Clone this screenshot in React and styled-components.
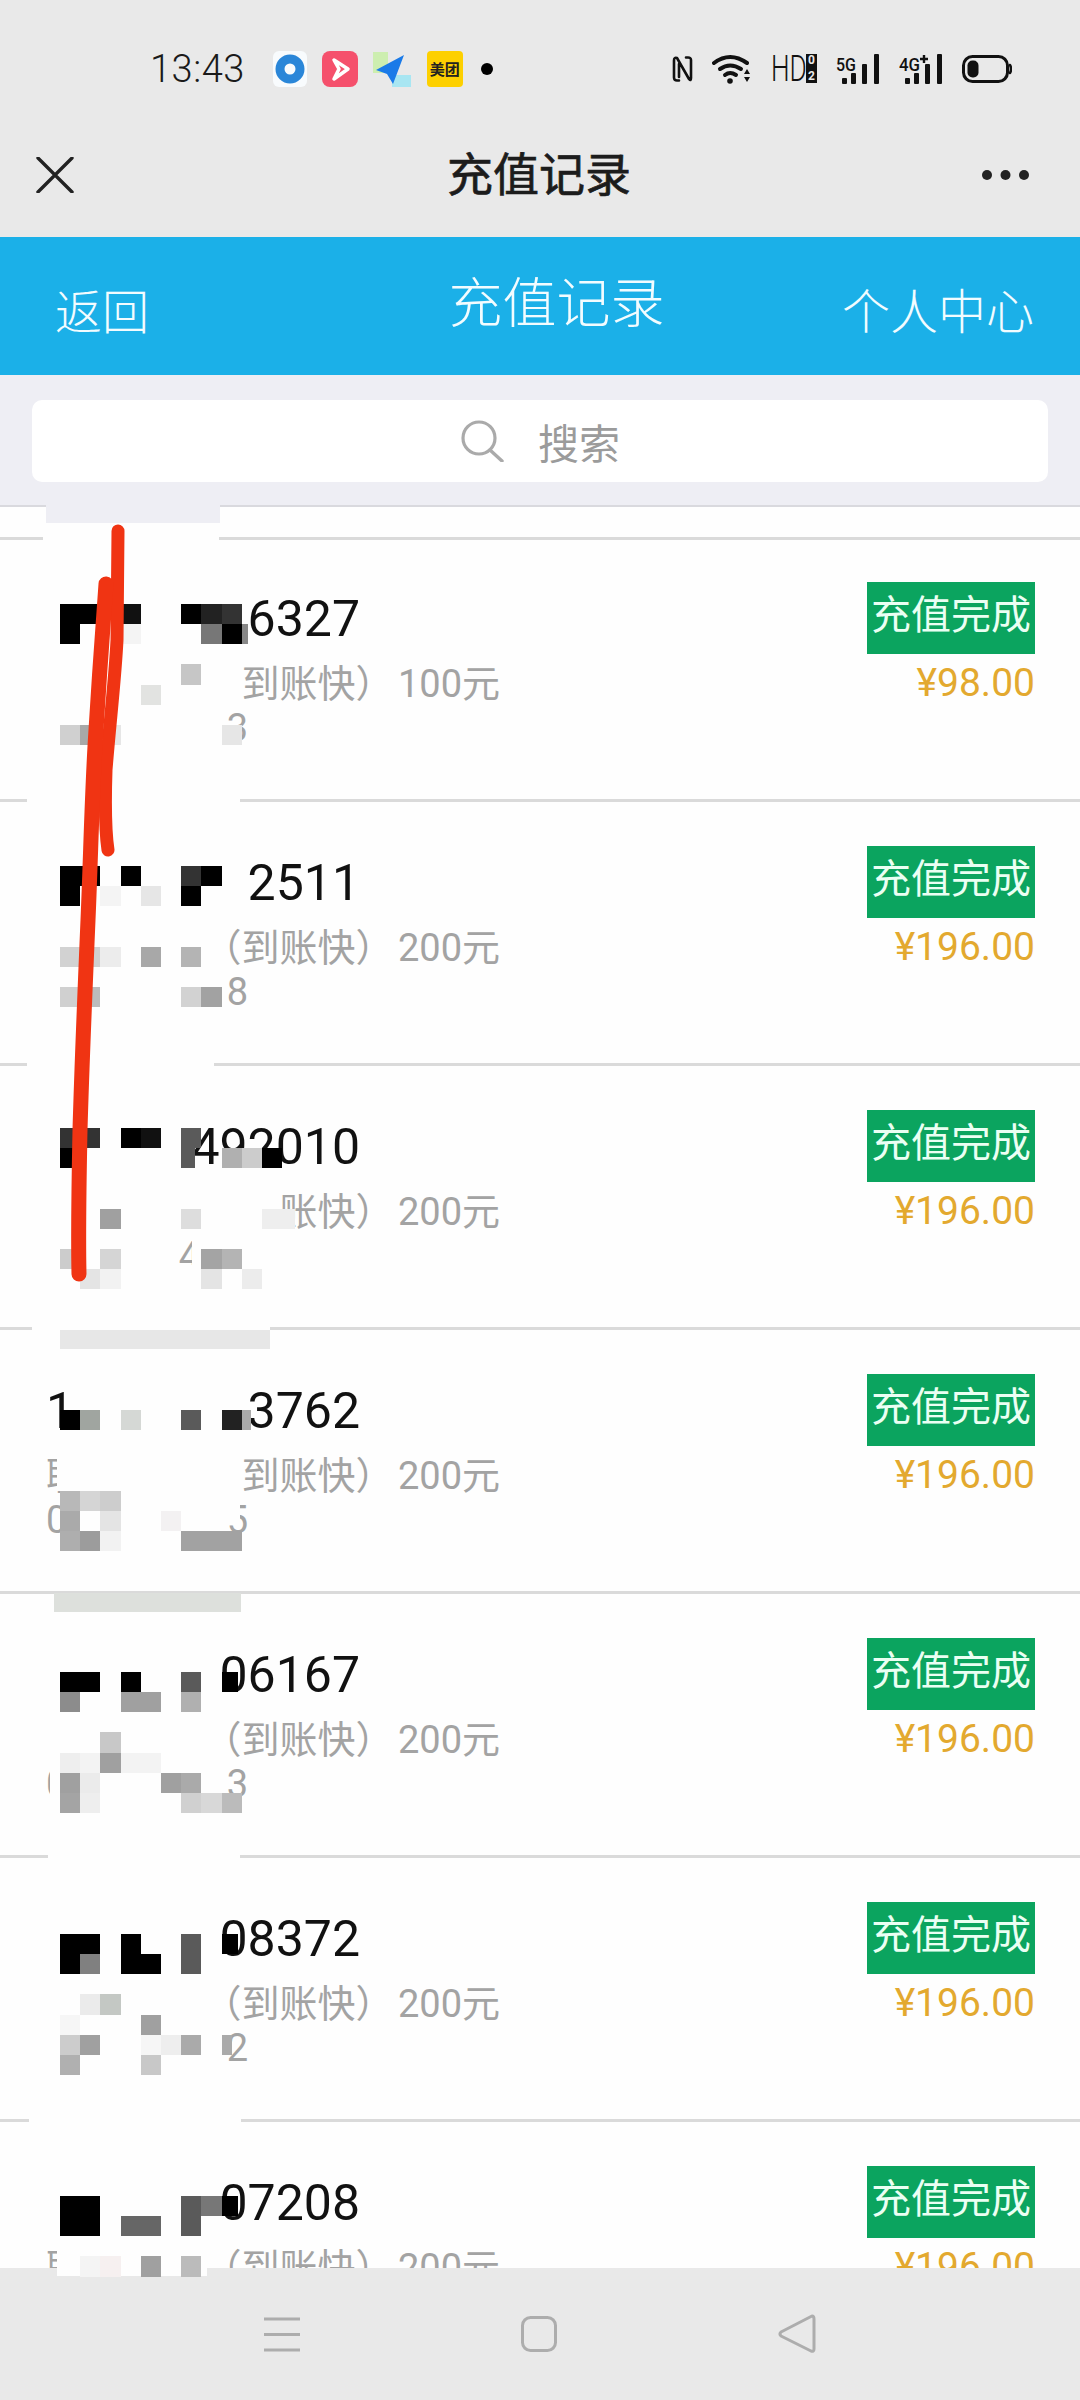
import React from 'react'
import styled, { createGlobalStyle } from 'styled-components'

const GlobalStyle = createGlobalStyle`
  html, body { margin: 0; padding: 0; background: #fff; }
  body { font-family: Roboto, "Noto Sans CJK SC", sans-serif; }
`

const Page = styled.div`
  position: relative;
  width: 1080px;
  height: 2400px;
  overflow: hidden;
  display: flex;
  flex-direction: column;
  background: #fefefe;
`

const StatusBar = styled.div`
  height: 112px;
  box-sizing: border-box;
  padding: 50px 68px 0 150px;
  display: flex;
  justify-content: space-between;
  align-items: flex-start;
  background: #e9e9e9;
`

const StatusGroup = styled.div`
  display: flex;
  align-items: center;
  gap: ${({ $gap }) => $gap}px;
  height: 37px;
`

const Time = styled.span`
  font-size: 38px;
  font-weight: 300;
  letter-spacing: 0.5px;
  color: #1a1a1a;
  margin-right: 13px;
`

const MeituanTile = styled.span`
  width: 36px;
  height: 36px;
  border-radius: 4px;
  background: #fdd000;
  color: #222;
  font-size: 15px;
  font-weight: 700;
  display: flex;
  align-items: center;
  justify-content: center;
`

const Dot = styled.span`
  width: 12px;
  height: 12px;
  border-radius: 50%;
  background: #000;
  margin-left: 3px;
`

const HdMark = styled.span`
  display: flex;
  align-items: center;
  width: 46px;
  height: 29px;
  gap: 1px;
`

const HdLabel = styled.span`
  width: 34px;
  font-size: 37px;
  line-height: 29px;
  font-weight: 300;
  color: #111;
  display: inline-block;
  transform: scaleX(0.71);
  transform-origin: left center;
`

const SimStack = styled.span`
  width: 11px;
  height: 29px;
  background: #111;
  color: #e9e9e9;
  font-size: 12px;
  font-weight: 700;
  line-height: 13px;
  text-align: center;
  display: flex;
  flex-direction: column;
  justify-content: space-between;
`

const NavBar = styled.div`
  height: 125px;
  box-sizing: border-box;
  padding: 0 50px 0 36px;
  display: grid;
  grid-template-columns: 1fr auto 1fr;
  align-items: center;
  background: #e9e9e9;

  & > svg:last-child {
    justify-self: end;
  }
`

const NavTitle = styled.h1`
  margin: -8px 0 0 12px;
  font-size: 46px;
  font-weight: 400;
  color: #1c1c1c;
  -webkit-text-stroke: 0.7px #1c1c1c;
`

const BlueBar = styled.div`
  height: 138px;
  box-sizing: border-box;
  padding: 0 46px 0 55px;
  display: grid;
  grid-template-columns: 1fr auto 1fr;
  align-items: center;
  background: #1bb0e8;
  color: #f2fcff;
`

const BackLink = styled.span`
  font-size: 47px;
  font-weight: 300;
  padding-top: 4px;
`

const CenterLink = styled.span`
  font-size: 48px;
  font-weight: 300;
  padding-top: 4px;
  justify-self: end;
`

const BlueTitle = styled.span`
  font-size: 54px;
  font-weight: 300;
  margin: -14px 0 0 24px;
`

const SearchArea = styled.div`
  height: 132px;
  box-sizing: border-box;
  padding: 25px 32px 0;
  background: #eeeef4;
  border-bottom: 2px solid #d9d9de;
`

const SearchBox = styled.div`
  height: 82px;
  border-radius: 10px;
  background: #fff;
  display: flex;
  align-items: center;
  justify-content: center;
  gap: 34px;
  color: #9b9b9b;
  font-size: 41px;
`

const List = styled.div`
  flex: 1;
  min-height: 0;
  overflow: hidden;
  padding-top: 30px;
`

const Row = styled.div`
  height: 264px;
  box-sizing: border-box;
  border-top: 3px solid #dadada;
  padding: 44px 45px 0 46px;
  display: flex;
  justify-content: space-between;

  &:first-child {
    height: 262px;
    padding-top: 42px;
  }
`

const Info = styled.div`
  display: flex;
  flex-direction: column;
`

const Phone = styled.div`
  width: 314px;
  margin-top: 7px;
  height: 60px;
  line-height: 60px;
  font-size: 50px;
  color: #111;
  display: flex;
  justify-content: space-between;
`

const Detail = styled.div`
  width: ${({ $width }) => $width}px;
  margin-top: ${({ $top }) => $top || 0}px;
  height: 44px;
  line-height: 44px;
  font-size: 38px;
  word-spacing: -5px;
  color: #a3a3a3;
  display: flex;
  justify-content: space-between;
  white-space: pre;
`

const Side = styled.div`
  display: flex;
  flex-direction: column;
  align-items: flex-end;
`

const Badge = styled.div`
  width: 168px;
  height: 72px;
  line-height: 68px;
  text-align: center;
  font-size: 40px;
  color: #eafff3;
  background: #0ba45f;
`

const Price = styled.div`
  margin-top: 7px;
  height: 44px;
  line-height: 44px;
  font-size: 39px;
  color: #e3a92f;
`

const BottomBar = styled.div`
  height: 132px;
  box-sizing: border-box;
  display: flex;
  align-items: center;
  background: #e9e9e9;
  padding-left: 264px;
  gap: 221px;
`

const Overlay = styled.svg`
  position: absolute;
  top: 0;
  left: 0;
  pointer-events: none;
`

const records = [
  { phone: '6327', plan: '到账快） 100元', tail: '3', price: '¥98.00' },
  { phone: '2511', plan: '（到账快） 200元', tail: '8', price: '¥196.00' },
  { phone: '492010', plan: '账快） 200元', tail: '4', tailWidth: 154, price: '¥196.00' },
  { head: '1', phone: '3762', planHead: '联', plan: '到账快） 200元', tailHead: '0', tail: '5', price: '¥196.00' },
  { phone: '06167', plan: '（到账快） 200元', tailHead: '0', tail: '3', price: '¥196.00' },
  { phone: '08372', plan: '（到账快） 200元', tail: '2', price: '¥196.00' },
  { phone: '07208', planHead: '联', plan: '（到账快） 200元', price: '¥196.00' },
]

// pixelated blocks over the numbers: [row, col, colour, width?]
const mosaics = [
  { y: 604, cells: [
    [0, 0, '#000'], [0, 1, '#000'], [0, 3, '#111'], [0, 6, '#000'], [0, 7, '#222'], [0, 8, '#333'],
    [1, 0, '#000'], [1, 3, '#f4f4f4'], [1, 7, '#777'], [1, 8, '#000'], [1, 9, '#888', 6],
    [3, 6, '#c6c6c6'], [4, 4, '#e2e3e1'],
    [6, 0, '#d0d0d0'], [6, 1, '#a8a8a8'], [6, 2, '#e6e6e6'], [6, 8, '#e6e6e6'],
  ] },
  { y: 866, cells: [
    [0, 0, '#000'], [0, 1, '#000'], [0, 3, '#000'], [0, 6, '#333'], [0, 7, '#000'],
    [1, 0, '#000'], [1, 2, '#f4f4f4'], [1, 4, '#e6e6e6'], [1, 6, '#000'],
    [4, 0, '#d2d2d2'], [4, 1, '#d0d0d0'], [4, 2, '#ececec'], [4, 4, '#a8a8a8'], [4, 6, '#b4b4b4'],
    [6, 0, '#d0d0d0'], [6, 1, '#bcbcbc'], [6, 6, '#d2d2d2'], [6, 7, '#a2a2a2'],
  ] },
  { y: 1128, cells: [
    [0, 0, '#333'], [0, 1, '#333'], [0, 3, '#000'], [0, 4, '#111'], [0, 6, '#5a5a5a'],
    [1, 0, '#000'], [1, 6, '#5a5a5a', 14], [1, 8, '#b0b0b0'], [1, 9, '#ccc'], [1, 10, '#000'],
    [4, 2, '#a0a0a0'], [4, 6, '#ddd'], [4, 10, '#eee', 33],
    [6, 0, '#ccc'], [6, 2, '#d5d5d5'], [6, 7, '#a4a4a4'], [6, 8, '#b4b4b4'],
    [7, 1, '#e4e4e4'], [7, 2, '#f2f2f2'], [7, 7, '#e4e4e4'], [7, 9, '#ececec'],
  ] },
  { y: 1410, cells: [
    [0, 0, '#000'], [0, 1, '#a0a5a0'], [0, 3, '#d5d8d5'], [0, 6, '#5a5a5a'], [0, 8, '#222'], [0, 9, '#aaa', 9],
    [4, 0, '#b8b8b8'], [4, 1, '#d5d5d5'], [4, 2, '#cdcdcd'],
    [5, 0, '#aaa'], [5, 2, '#e4e4e4'], [5, 5, '#f3f1f2'],
    [6, 0, '#aeaeae'], [6, 1, '#9c9c9c'], [6, 2, '#f2f2f2'], [6, 6, '#a2a2a2'], [6, 7, '#a2a2a2'], [6, 8, '#a2a2a2'],
  ] },
  { y: 1672, cells: [
    [0, 0, '#000'], [0, 1, '#000'], [0, 3, '#000'], [0, 6, '#5a5a5a'], [0, 8, '#000', 16],
    [1, 0, '#8c8c8c'], [1, 3, '#a0a0a0'], [1, 4, '#a0a0a0'], [1, 6, '#b0b0b0'],
    [3, 2, '#c8c8c8'],
    [4, 0, '#eee'], [4, 1, '#f3f3f3'], [4, 2, '#a0a0a0'], [4, 3, '#f3f3f3'], [4, 4, '#f3f3f3'],
    [5, 0, '#a0a0a0'], [5, 1, '#ebebeb'], [5, 5, '#a0a0a0'], [5, 6, '#aaa'],
    [6, 0, '#a4a4a4'], [6, 1, '#eee'], [6, 6, '#d0d0d0'], [6, 7, '#d8d8d8'], [6, 8, '#bbb'],
  ] },
  { y: 1934, cells: [
    [0, 0, '#000'], [0, 1, '#000'], [0, 3, '#000'], [0, 6, '#5a5a5a'], [0, 8, '#000', 16],
    [1, 0, '#000'], [1, 1, '#808080'], [1, 3, '#000'], [1, 4, '#000'], [1, 6, '#5a5a5a'],
    [3, 1, '#ebebeb'], [3, 2, '#c4c8c4'],
    [4, 0, '#f6f6f6'], [4, 4, '#a0a0a0'],
    [5, 0, '#ccc'], [5, 1, '#a0a0a0'], [5, 4, '#f6f6f6'], [5, 5, '#eee'], [5, 6, '#aaa'], [5, 8, '#aaa', 10],
    [6, 0, '#b0b0b0'], [6, 4, '#c8c8c8'],
  ] },
  { y: 2196, cells: [
    [0, 0, '#000'], [0, 1, '#000'], [0, 6, '#5a5a5a'], [0, 7, '#777'], [0, 8, '#000', 16],
    [1, 0, '#000'], [1, 1, '#000'], [1, 3, '#666'], [1, 4, '#666'], [1, 6, '#5a5a5a'],
    [3, 1, '#f4f4f4'], [3, 2, '#f6f0f0'], [3, 4, '#a0a0a0'], [3, 6, '#bbb'],
  ] },
]

// patches that break the separators and hide the left over glyphs
const patches = [
  [46, 482, 174, 41, '#eeeef4'],
  [43, 535, 176, 6, '#fefefe'],
  [27, 797, 213, 6, '#fefefe'],
  [27, 1061, 187, 6, '#fefefe'],
  [32, 1325, 238, 5, '#fefefe'],
  [60, 1330, 210, 19, '#e7e7e7'],
  [54, 1593, 187, 19, '#dde0dc'],
  [48, 1853, 192, 6, '#fefefe'],
  [29, 2116, 212, 6, '#fefefe'],
  [57, 1455, 40, 36, '#fefefe'],
  [50, 1750, 12, 60, '#fefefe'],
  [57, 2240, 60, 36, '#fefefe'],
  [64, 2268, 143, 8, '#fefefe'],
  [192, 1235, 10, 40, '#fefefe'],
  [170, 1265, 32, 12, '#fefefe'],
  [222, 1490, 18, 30, '#fefefe'],
]

const Redaction = () => (
  <Overlay width="1080" height="2400" viewBox="0 0 1080 2400">
    <g shapeRendering="crispEdges">
      {patches.map(([x, y, w, h, fill], i) => (
        <rect key={`patch-${i}`} x={x} y={y} width={w} height={h} fill={fill} />
      ))}
      {mosaics.map((m) =>
        m.cells.map(([row, col, color, w], i) => (
          <rect
            key={`cell-${m.y}-${i}`}
            x={60 + col * 20.2}
            y={m.y + row * 20.15}
            width={w || 20.2}
            height={20.15}
            fill={color}
          />
        ))
      )}
    </g>
    <g fill="none" stroke="#f03413" strokeLinecap="round" strokeLinejoin="round">
      <path d="M118 531 L117 640 C115 680 110 720 106 770 C105 800 105 830 108 850" strokeWidth="13" />
      <path d="M106 584 C102 640 99 680 96 730 C92 790 91 850 88 920 C85 990 82 1060 80 1130 C79 1180 78 1230 79 1274" strokeWidth="15" />
    </g>
  </Overlay>
)

const BlueDisc = () => (
  <svg width="34" height="36" viewBox="0 0 34 36">
    <rect width="34" height="36" rx="6" fill="#f8fbfd" />
    <circle cx="17" cy="18" r="10" fill="none" stroke="#2a86d8" strokeWidth="9" />
  </svg>
)

const RedPlay = () => (
  <svg width="36" height="36" viewBox="0 0 36 36">
    <rect width="36" height="36" rx="8" fill="#f5506c" />
    <path d="M12 9 L26 18 L12 28 L17 18 Z" fill="none" stroke="#fff" strokeWidth="3.5" strokeLinejoin="round" />
  </svg>
)

const PlaneTile = () => (
  <svg width="39" height="36" viewBox="0 0 39 36">
    <rect x="0" y="1" width="15" height="21" fill="#cdeeb0" />
    <rect x="19" y="24" width="19" height="12" fill="#a8e6f2" />
    <path d="M31 4 L3 19 L14 23 L20 33 Z" fill="#1a7ae8" />
  </svg>
)

const NfcIcon = () => (
  <svg width="21" height="28" viewBox="0 0 21 28">
    <path d="M7 25.5 H5 Q2 25.5 2 22.5 V5.5 Q2 2 5 3 L17 24 Q19 26.5 19 23 V5 Q19 2.5 16 2.5 H14 M7 9 V22" fill="none" stroke="#111" strokeWidth="2.6" strokeLinecap="round" strokeLinejoin="round" />
  </svg>
)

const WifiIcon = () => (
  <svg width="40" height="30" viewBox="0 0 40 30">
    <g fill="none" stroke="#111" strokeWidth="4" strokeLinecap="round">
      <path d="M2 9 Q18 -3 35 9" />
      <path d="M8 15 Q18 8 29 15" />
      <path d="M13 21 Q18 17 24 21" />
    </g>
    <circle cx="18" cy="27" r="2.8" fill="#111" />
    <path d="M32 20 L35 15 L38 20 Z M32 23 L38 23 L35 28 Z" fill="#111" />
  </svg>
)

const Signal = ({ label, plus }) => (
  <svg width="44" height="30" viewBox="0 0 44 30">
    <text x="0" y="17" fontSize="19" fontWeight="500" fontFamily="Roboto, sans-serif" textLength={plus ? 21 : 20} lengthAdjust="spacingAndGlyphs" fill="#111">{label}</text>
    {plus && <path d="M25 1 V9 M21 5 H29" stroke="#111" strokeWidth="2.4" />}
    <rect x="6" y="24" width="5" height="6" rx="1" fill="#111" />
    <rect x="15" y="19" width="5" height="11" rx="1" fill="#111" />
    <rect x="26" y="10" width="5" height="20" rx="1" fill="#111" />
    <rect x="38" y="0" width="5" height="30" rx="1" fill="#111" />
  </svg>
)

const BatteryIcon = () => (
  <svg width="50" height="28" viewBox="0 0 50 28">
    <rect x="1.5" y="1.5" width="44" height="25" rx="9" fill="none" stroke="#111" strokeWidth="3" />
    <rect x="5.5" y="5.5" width="11" height="17" rx="5" fill="#111" />
    <path d="M48 10 Q50 14 48 18" fill="none" stroke="#111" strokeWidth="2.6" strokeLinecap="round" />
  </svg>
)

const CloseIcon = () => (
  <svg width="38" height="36" viewBox="0 0 38 36">
    <path d="M2 1 L36 35 M36 1 L2 35" stroke="#222" strokeWidth="3.4" strokeLinecap="round" />
  </svg>
)

const MoreIcon = () => (
  <svg width="49" height="12" viewBox="0 0 49 12">
    <circle cx="6" cy="6" r="5" fill="#222" />
    <circle cx="24.5" cy="6" r="5" fill="#222" />
    <circle cx="43" cy="6" r="5" fill="#222" />
  </svg>
)

const SearchIcon = () => (
  <svg width="44" height="42" viewBox="0 0 44 42">
    <circle cx="19" cy="18" r="16" fill="none" stroke="#aaa" strokeWidth="3.2" />
    <path d="M30 30 L42 41" stroke="#aaa" strokeWidth="3.4" strokeLinecap="round" />
  </svg>
)

const MenuKey = () => (
  <svg width="36" height="35" viewBox="0 0 36 35">
    <path d="M0 2 H36 M0 17.5 H36 M0 33 H36" stroke="#adadad" strokeWidth="3" />
  </svg>
)

const HomeKey = () => (
  <svg width="36" height="36" viewBox="0 0 36 36">
    <rect x="1.5" y="1.5" width="33" height="33" rx="8" fill="none" stroke="#adadad" strokeWidth="3" />
  </svg>
)

const BackKey = () => (
  <svg width="38" height="40" viewBox="0 0 38 40">
    <path d="M34 2 Q36 2 36 5 V35 Q36 38 33 37 L3 22 Q1 20 3 18 Z" fill="none" stroke="#adadad" strokeWidth="3" strokeLinejoin="round" />
  </svg>
)

const RecordRow = ({ record }) => (
  <Row>
    <Info>
      <Phone>
        <span>{record.head}</span>
        <span>{record.phone}</span>
      </Phone>
      <Detail $width={454} $top={13}>
        <span>{record.planHead}</span>
        <span>{record.plan}</span>
      </Detail>
      <Detail $width={record.tailWidth || 202}>
        <span>{record.tailHead}</span>
        <span>{record.tail}</span>
      </Detail>
    </Info>
    <Side>
      <Badge>充值完成</Badge>
      <Price>{record.price}</Price>
    </Side>
  </Row>
)

const App = () => (
  <Page>
    <GlobalStyle />
    <StatusBar>
      <StatusGroup $gap={15}>
        <Time>13:43</Time>
        <BlueDisc />
        <RedPlay />
        <PlaneTile />
        <MeituanTile>美团</MeituanTile>
        <Dot />
      </StatusGroup>
      <StatusGroup $gap={19}>
        <NfcIcon />
        <WifiIcon />
        <HdMark>
          <HdLabel>HD</HdLabel>
          <SimStack><span>0</span><span>2</span></SimStack>
        </HdMark>
        <Signal label="5G" />
        <Signal label="4G" plus />
        <BatteryIcon />
      </StatusGroup>
    </StatusBar>
    <NavBar>
      <CloseIcon />
      <NavTitle>充值记录</NavTitle>
      <MoreIcon />
    </NavBar>
    <BlueBar>
      <BackLink>返回</BackLink>
      <BlueTitle>充值记录</BlueTitle>
      <CenterLink>个人中心</CenterLink>
    </BlueBar>
    <SearchArea>
      <SearchBox>
        <SearchIcon />
        <span>搜索</span>
      </SearchBox>
    </SearchArea>
    <List>
      {records.map((record, i) => (
        <RecordRow key={`record-${i}`} record={record} />
      ))}
    </List>
    <BottomBar>
      <MenuKey />
      <HomeKey />
      <BackKey />
    </BottomBar>
    <Redaction />
  </Page>
)

export default App
